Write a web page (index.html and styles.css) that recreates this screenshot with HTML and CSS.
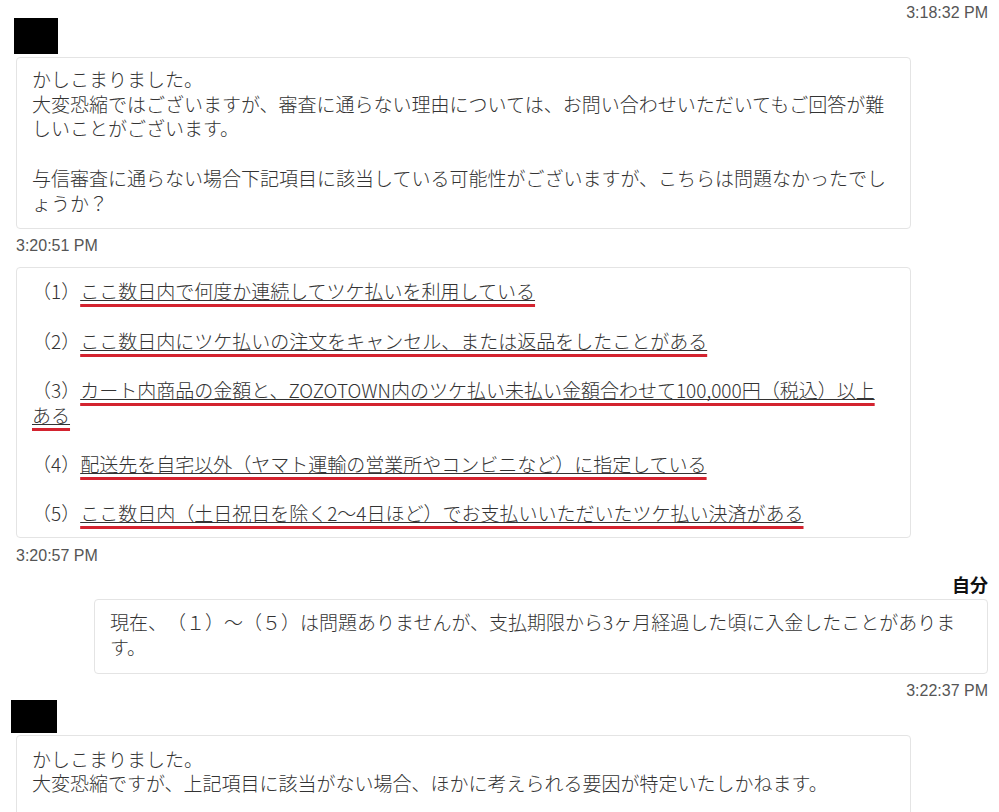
FILE: index.html
```html
<!DOCTYPE html>
<html lang="ja">
<head>
<meta charset="utf-8">
<title>チャット</title>
<link rel="stylesheet" href="styles.css">
</head>
<body>
<div class="chat">
  <div class="ts ts-right">3:18:32 PM</div>
  <div class="avatar"></div>
  <div class="bubble bubble-left">
    <p class="msg">かしこまりました。<br>大変恐縮ではございますが、審査に通らない理由については、お問い合わせいただいてもご回答が難<br>しいことがございます。<br><br>与信審査に通らない場合下記項目に該当している可能性がございますが、こちらは問題なかったでし<br>ょうか？</p>
  </div>
  <div class="ts ts-gap">3:20:51 PM</div>
  <div class="bubble bubble-left bubble-list">
    <p class="msg">（1）<span class="mark"><span class="ul">ここ数日内で何度か連続してツケ払いを利用している</span></span></p>
    <p class="msg">（2）<span class="mark"><span class="ul">ここ数日内にツケ払いの注文をキャンセル、または返品をしたことがある</span></span></p>
    <p class="msg">（3）<span class="mark"><span class="ul">カート内商品の金額と、ZOZOTOWN内のツケ払い未払い金額合わせて100,000円（税込）以上<br>ある</span></span></p>
    <p class="msg">（4）<span class="mark"><span class="ul">配送先を自宅以外（ヤマト運輸の営業所やコンビニなど）に指定している</span></span></p>
    <p class="msg">（5）<span class="mark"><span class="ul">ここ数日内（土日祝日を除く2～4日ほど）でお支払いいただいたツケ払い決済がある</span></span></p>
  </div>
  <div class="ts ts-gap2">3:20:57 PM</div>
  <div class="self-name">自分</div>
  <div class="bubble bubble-right">
    <p class="msg">現在、（１）～（５）は問題ありませんが、支払期限から3ヶ月経過した頃に入金したことがありま<br>す。</p>
  </div>
  <div class="ts ts-right ts-gap">3:22:37 PM</div>
  <div class="avatar avatar-b"></div>
  <div class="bubble bubble-left bubble-last">
    <p class="msg">かしこまりました。<br>大変恐縮ですが、上記項目に該当がない場合、ほかに考えられる要因が特定いたしかねます。</p>
  </div>
</div>
</body>
</html>
```
FILE: styles.css
```css
html, body {
  margin: 0;
  padding: 0;
  background: #ffffff;
}

body {
  font-family: "Noto Sans CJK JP", "Noto Sans", sans-serif;
  color: #333333;
}

.chat {
  display: flex;
  flex-direction: column;
  padding: 4px 11px 0 16px;
}

.ts {
  font-family: "Liberation Sans", Arial, sans-serif;
  font-size: 16px;
  line-height: 18px;
  color: #555555;
}

.ts-right {
  text-align: right;
}

.ts-gap {
  margin-top: 8px;
}

.ts-gap2 {
  margin-top: 9px;
}

.avatar {
  width: 44px;
  height: 36px;
  background: #000000;
  margin-left: -2px;
  margin-top: -4px;
}

.avatar-b {
  width: 46px;
  height: 33px;
  margin-left: -5px;
  margin-top: 0;
}

.bubble {
  box-sizing: border-box;
  width: 895px;
  border: 1px solid #e4e4e4;
  border-radius: 4px;
  background: #ffffff;
  padding: 9px 15px 13px 15px;
  margin-top: 3px;
}

.bubble-list {
  margin-top: 12px;
  padding-top: 11px;
  padding-bottom: 11px;
  display: flex;
  flex-direction: column;
  gap: 24.7px;
}

.bubble-right {
  width: 894px;
  align-self: flex-end;
  margin-top: 4px;
  padding-top: 10px;
}

.bubble-last {
  margin-top: 2px;
  padding-top: 11px;
  height: 90px;
}

.msg {
  margin: 0;
  font-size: 19px;
  font-weight: 300;
  line-height: 24.7px;
  text-spacing-trim: space-all;
  white-space: nowrap;
}

.mark {
  text-decoration: underline;
  text-decoration-color: #d3232f;
  text-decoration-thickness: 3px;
  text-underline-offset: 5px;
  text-decoration-skip-ink: none;
}

.ul {
  text-decoration: underline;
  text-decoration-color: #333333;
  text-decoration-thickness: 1px;
  text-underline-offset: 1px;
  text-decoration-skip-ink: none;
}

.self-name {
  margin-top: 8px;
  text-align: right;
  font-size: 18px;
  line-height: 22px;
  font-weight: bold;
  color: #111111;
}
```
